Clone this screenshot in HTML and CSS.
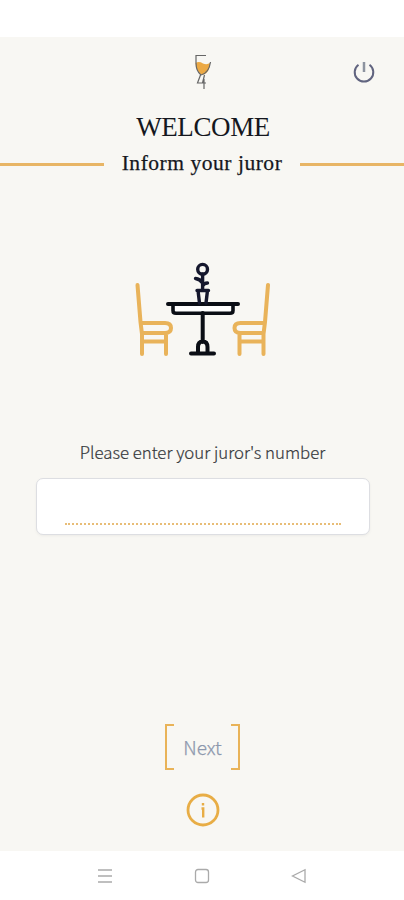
FILE: index.html
```html
<!DOCTYPE html>
<html lang="en">
<head>
<meta charset="utf-8">
<title>Welcome</title>
<link rel="stylesheet" href="styles.css">
</head>
<body>
<main class="screen">
  <header class="topbar">
    <span></span>
    <svg class="logo" width="24" height="40" viewBox="0 0 24 40">
      <path class="wine" d="M5.500 13Q9 11 13 13.500Q17 15 20 13Q20 22 14 24.500L11 24.500Q6 21 5.500 13Z"/>
      <path d="M16 5.500H6V13Q6 21 11 25Q19 23 20.500 12M10.500 25L7.500 33H16M14.500 25L12.500 33M14 29V39"/>
    </svg>
    <svg class="power" width="24" height="24" viewBox="0 0 24 24">
      <path d="M6.500 4.800A9.300 9.300 0 1 0 17.500 4.800"/>
      <path class="power-bar" d="M12 2V12"/>
    </svg>
  </header>
  <h1>WELCOME</h1>
  <div class="subtitle"><h2>Inform your juror</h2></div>
  <svg class="scene" width="155" height="115" viewBox="125 250 155 115">
    <g class="chair">
      <path d="M137.500 285L140.500 322L142 334V354M141 323H165Q171 323 171 328T165 333H142M166 333V354M142 341.500H166"/>
      <path d="M268 285L265 322L263.500 334V354M264.500 323H240.500Q234.500 323 234.500 328T240.500 333H263.500M239.500 333V354M263.500 341.500H239.500"/>
    </g>
    <g class="table">
      <path class="apron" d="M173 304V310.500Q173 313.300 176 313.300H230Q233 313.300 233 310.500V304"/>
      <path d="M168 304H238M202.700 313V342M191 353.500H214M198 353V347Q198 341.500 202.700 341.500T207.500 347V353"/>
    </g>
    <g class="plant">
      <circle cx="202.600" cy="269.300" r="4.900"/>
      <path d="M202.600 274V290M202.600 283Q200 279 195.500 278.500M202.600 286Q204 283 207.500 283M197 290.500H208.500M198 290.500L199.500 303M207.500 290.500L206 303"/>
    </g>
  </svg>
  <label for="juror">Please enter your juror's number</label>
  <div class="field"><input id="juror" type="text"></div>
  <button class="next" type="button">Next</button>
  <svg class="info" width="34" height="34" viewBox="0 0 34 34">
    <circle cx="17" cy="17" r="15"/>
    <path class="info-mark" d="M15.500 15.500H17.200V24.500M17 10V12.500"/>
  </svg>
</main>
<nav class="navbar">
  <svg width="16" height="16" viewBox="0 0 16 16"><path d="M1 2H15M1 8H15M1 14H15"/></svg>
  <svg width="16" height="16" viewBox="0 0 16 16"><rect x="1.500" y="1.500" width="13" height="13" rx="2.500"/></svg>
  <svg width="16" height="16" viewBox="0 0 16 16"><path d="M14 1.700V14.300L1.500 8Z"/></svg>
</nav>
</body>
</html>
```
FILE: styles.css
```css
* { box-sizing: border-box; }
body {
  margin: 0;
  padding-top: 37px;
  height: 900px;
  background: #fff;
  font-family: "Noto Sans CJK SC", "Noto Sans", sans-serif;
  overflow: hidden;
}
svg { display: block; fill: none; }
.screen {
  height: 814px;
  background: #f8f7f3;
  display: flex;
  flex-direction: column;
  align-items: center;
}
.topbar {
  width: 100%;
  height: 70px;
  padding: 13px 28px 0;
  display: grid;
  grid-template-columns: 1fr 24px 1fr;
}
.logo { stroke: #666; stroke-width: 1.2; }
.wine { fill: #eca944; stroke: none; }
.power { justify-self: end; margin-top: 10px; stroke: #61647f; stroke-width: 2; }
.power-bar { stroke: #8d939f; stroke-width: 2.5; }
h1, h2 {
  margin: 0;
  font-family: "Liberation Serif", serif;
  font-weight: 400;
  color: #15171e;
  white-space: nowrap;
}
h1 { font-size: 27px; line-height: 40px; letter-spacing: -0.4px; margin-left: 2px; }
.subtitle {
  width: 100%;
  height: 34px;
  display: flex;
  align-items: center;
  gap: 18px;
}
.subtitle::before, .subtitle::after {
  content: "";
  flex: 1;
  height: 3px;
  margin-top: 1px;
  background: #e8b565;
}
h2 {
  margin-top: -2px;
  font-size: 21.5px;
  line-height: 30px;
  letter-spacing: 0.53px;
  -webkit-text-stroke: 0.25px #15171e;
}
.scene {
  margin: 69px 0 0 1px;
  stroke-linecap: round;
  stroke-linejoin: round;
}
.chair { stroke: #e9b35a; stroke-width: 4; }
.table { stroke: #0b0e15; stroke-width: 4; }
.apron { fill: #fff; stroke-width: 3.6; }
.plant { stroke: #15172d; stroke-width: 3.4; }
label {
  margin: 74px 0 0 1px;
  height: 26px;
  font-size: 16.8px;
  line-height: 26px;
  font-weight: 300;
  color: #35373b;
  -webkit-text-stroke: 0.2px #35373b;
  white-space: nowrap;
}
.field {
  width: 334px;
  height: 57px;
  margin: 13px 0 0 1px;
  padding: 12px 28px 9px;
  background: #fff;
  border: 1.500px solid #dddee2;
  border-radius: 7px;
  box-shadow: 0 1px 3px #0000000d;
}
input {
  display: block;
  width: 100%;
  height: 34px;
  padding: 0;
  border: 0;
  border-bottom: 2px dotted #e8bd77;
  background: transparent;
  font: inherit;
  outline: 0;
}
.next {
  width: 75px;
  height: 46px;
  margin: 189px 0 0 1px;
  padding: 0;
  border: solid #e9b358;
  border-width: 0 2.500px;
  background:
    linear-gradient(#e9b358, #e9b358) 0 0 / 7px 2px no-repeat,
    linear-gradient(#e9b358, #e9b358) 100% 0 / 7px 2px no-repeat,
    linear-gradient(#e9b358, #e9b358) 0 100% / 7px 2px no-repeat,
    linear-gradient(#e9b358, #e9b358) 100% 100% / 7px 2px no-repeat;
  font: 300 19px/44px "Noto Sans CJK SC", sans-serif;
  color: #8d98ad;
  -webkit-text-stroke: 0.25px #8d98ad;
}
.info { margin: 23px 0 0 1px; stroke: #e8ad45; stroke-width: 2.8; }
.info-mark { stroke-width: 2.4; }
.navbar {
  height: 49px;
  padding: 0 97px;
  display: flex;
  justify-content: space-between;
  align-items: center;
  stroke: #aaa;
  stroke-width: 1.3;
}
```
